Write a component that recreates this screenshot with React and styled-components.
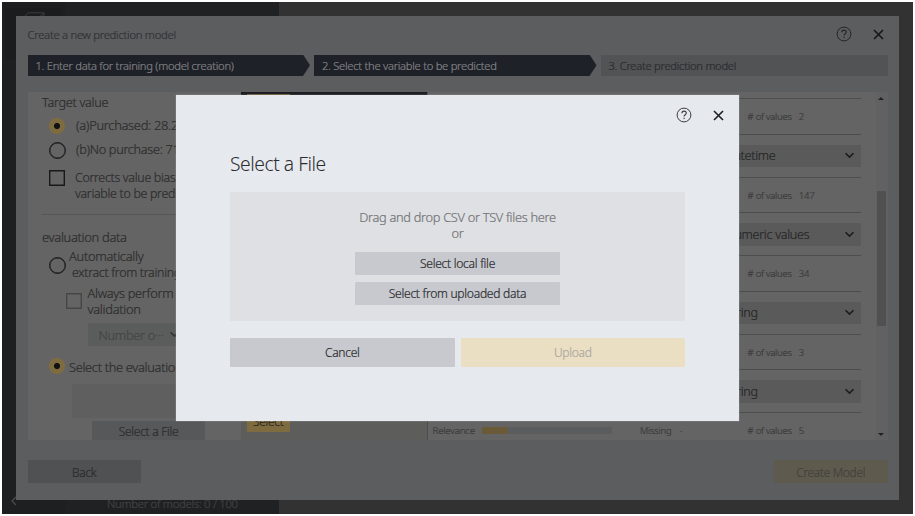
import React from 'react';
import styled, { createGlobalStyle, css } from 'styled-components';

const GlobalStyle = createGlobalStyle`
  * { box-sizing: border-box; letter-spacing: -0.024em; }
  html, body { margin: 0; background: #fff; }
  body {
    font-family: "Noto Sans", "Open Sans", sans-serif; font-weight: 300; overflow: hidden;
    -webkit-text-stroke: .2px currentColor;
  }
`;

const Page = styled.div`
  width: 915px; height: 516px; padding: 2px; position: relative; background: #fff;
`;
const Backdrop = styled.div`
  display: flex; width: 911px; height: 512px; background: #323232;
`;
const Sidebar = styled.div`
  width: 64px; background: #1e1f21; display: flex; flex-direction: column;
`;
const SideTile = styled.div`
  width: 57px; height: 52px; margin: 6px 0 0 3px; background: #1b1c1e; padding: 4px 0 0 18px;
  svg { display: block; }
`;
const SideBack = styled.div`
  margin: auto 0 6px 8px; height: 12px; svg { display: block; }
`;
const Models = styled.div`
  width: 213px; background: #202123; color: #434445; font-size: 11.3px; line-height: 16px;
  display: flex; align-items: flex-end; padding: 0 0 2px 41px; white-space: nowrap;
`;

const Dialog = styled.div`
  position: absolute; left: 16px; top: 16px; width: 883px; height: 483.5px;
  background: #5c5d5f; padding: 0 11.5px; display: flex; flex-direction: column;
`;
const DialogHead = styled.div`
  height: 38.5px; display: flex; align-items: center; padding-right: 3.5px; color: #303132;
  font-size: 11.25px; svg { display: block; }
`;
const HeadTitle = styled.div`flex: 1; margin-top: -2px;`;
const HeadIcons = styled.div`display: flex; gap: 21px; align-items: center; margin-top: -2px;`;

const Steps = styled.div`display: flex; gap: 4px; height: 21.5px; font-size: 11.2px;`;
const Step = styled.div`
  width: ${p => p.$w}px; height: 21.5px; line-height: 22px; padding-left: 8px; white-space: nowrap;
  background: ${p => (p.$done ? '#1f2129' : '#525354')};
  color: ${p => (p.$done ? '#838487' : '#2a2b2d')};
  ${p => p.$done && css`clip-path: polygon(0 0, calc(100% - 7px) 0, 100% 50%, calc(100% - 7px) 100%, 0 100%);`}
`;

const Body = styled.div`
  margin-top: 16px; height: 348px; display: flex; background: #646464; overflow: hidden; flex: none;
`;
const Settings = styled.div`
  width: 213.5px; padding-left: 14.5px; overflow: hidden; color: #2c2c2c; font-size: 12.6px;
  white-space: nowrap;
`;
const PaneTitle = styled.div`height: ${p => p.$h}px; line-height: ${p => p.$lh || 20}px; font-size: ${p => p.$fs || 12.7}px;`;
const Option = styled.div`
  display: flex; align-items: ${p => (p.$top ? 'flex-start' : 'center')}; height: ${p => p.$h}px;
  padding-left: ${p => p.$indent}px; gap: ${p => p.$gap}px; font-size: ${p => p.$fs || 12.9}px; line-height: 15.6px;
`;
const OptionText = styled.div`margin-top: ${p => p.$mt || 0}px;`;
const SecondLine = styled.div`padding-left: ${p => p.$x || 0}px; font-size: ${p => p.$fs || 12.4}px;`;
const Radio = styled.div`
  width: 17px; height: 17px; border-radius: 50%; flex: none; margin-top: ${p => p.$mt || 0}px;
  ${p => p.$on
    ? css`width: 16px; height: 16px; margin-right: 1px; background: radial-gradient(circle, #111 0 2.7px, #7f6b40 3.4px);`
    : css`border: 1.5px solid #191919; box-shadow: inset 0 0 0 .4px #191919;`}
`;
const Check = styled.div`
  width: 16px; height: 16px; flex: none; margin-top: ${p => p.$mt || 0}px;
  border: 1.5px solid ${p => (p.$off ? '#464646' : '#191919')};
  box-shadow: inset 0 0 0 .4px ${p => (p.$off ? '#464646' : '#191919')};
`;
const Rule = styled.div`height: 1px; background: #565656; margin: 0 10px 13px 0;`;
const FoldSelect = styled.div`
  width: 97px; height: 23px; margin: 0 0 20px 45.5px; padding: 0 5px 0 11px; background: #5b5d5d;
  color: #434444; display: flex; align-items: center; justify-content: space-between; font-size: 12.8px;
`;
const FileBox = styled.div`width: 134px; height: 33.5px; margin: 0 0 3px 30px; background: #5f5f5f;`;
const PaneButton = styled.div`
  width: 113px; height: 24px; margin-left: 50px; background: #57585a; text-align: center;
  line-height: 22px; font-size: 12px;
`;

const Preview = styled.div`
  width: 186.5px; background: #5d5d5c; display: flex; flex-direction: column; align-items: flex-start;
  border-right: 1px solid #4d4d4d;
`;
const PreviewBar = styled.div`
  width: 100%; height: 26px; background: #1e1e22; padding: 2px 6px;
`;
const PreviewTab = styled.div`width: 43px; height: 20px; background: #6b5a37;`;
const PickButton = styled.div`
  width: 42.5px; height: 22px; margin: auto 0 8.5px 6px; background: #7f6b40; border-radius: 1px;
  color: #2a271f; font-size: 12px; line-height: 24px; text-align: center;
`;

const Variables = styled.div`width: 433px; padding-left: 5px; overflow: hidden;`;
const Variable = styled.div`height: 78.5px; margin-top: ${p => (p.$first ? -36 : 0)}px;`;
const TypeRow = styled.div`
  height: 42px; display: flex; justify-content: flex-end; align-items: flex-end; padding-bottom: 9.5px;
`;
const TypeSelect = styled.div`
  width: 146px; height: 22.5px; background: #5a5a5a; color: #262626; font-size: 12.6px;
  display: flex; align-items: center; justify-content: space-between; padding: 0 6px 0 11px;
`;
const Stats = styled.div`
  height: 36.5px; border-top: 1.5px solid #4e4e4e; border-bottom: 1px solid #4c4c4c; display: flex;
  align-items: center; color: #3a3a3a; font-size: 9.5px; padding-top: 1px;
  white-space: nowrap;
`;
const StatName = styled.div`width: 49.5px; font-size: 9.8px;`;
const Meter = styled.div`
  width: 130px; height: 7px; background: linear-gradient(90deg, #6b5a37 0 26px, #5a5c5e 26px); margin-right: 28px;
`;
const Missing = styled.div`width: 107.5px; display: flex; gap: 8px;`;
const Count = styled.div`display: flex; gap: 7px;`;

const Scroll = styled.div`
  width: 12px; margin-left: auto; background: #616163; display: flex; flex-direction: column; align-items: center;
  padding: 5px 0 4.5px;
`;
const Thumb = styled.div`width: 9px; height: 135px; margin: 90.5px 1px 0 0; background: #505050;`;
const Arrow = styled.div`
  margin-right: 1px; border: 3px solid transparent; border-width: 0 3px;
  ${p => (p.$down ? css`border-top: 3px solid #222; margin-top: auto;` : css`border-bottom: 3px solid #222;`)}
`;

const DialogFoot = styled.div`
  margin-top: 20px; display: flex; justify-content: space-between;
`;
const FootButton = styled.div`
  width: 113.5px; height: 22.5px; line-height: 24px; text-align: center; font-size: 11.9px;
  background: ${p => (p.$primary ? '#5f5a4e' : '#505153')};
  color: ${p => (p.$primary ? '#42413d' : '#2a2b2c')};
`;

const Modal = styled.div`
  position: absolute; left: 176px; top: 95px; width: 563px; height: 325.5px; background: #e6e9ee;
  padding: 0 54px; display: flex; flex-direction: column; color: #2b2c2f;
  box-shadow: 0 0 1px rgba(255,255,255,.6);
`;
const ModalIcons = styled.div`
  height: 40px; margin-right: -39px; display: flex; justify-content: flex-end; align-items: center; gap: 21px;
`;
const ModalTitle = styled.div`height: 57px; padding-top: 15px; line-height: 28px; font-size: 19.3px; -webkit-text-stroke: 0;`;
const DropZone = styled.div`
  height: 129px; background: #dfe0e3; display: flex; flex-direction: column; align-items: center; padding-top: 17px;
  color: #747578; font-size: 12.8px; line-height: 16px;
`;
const ZoneButton = styled.div`
  width: 205px; height: 23px; margin-top: ${p => p.$mt}px; background: #c8c9ce; border-radius: 1px; color: #2b2c2f;
  text-align: center; line-height: 24.5px; font-size: 12.1px; flex: none;
`;
const Actions = styled.div`margin-top: 17px; display: flex; gap: 6px;`;
const Action = styled.div`
  flex: 1; height: 28.5px; line-height: 30.5px; text-align: center; font-size: 12px; border-radius: 1px;
  background: ${p => (p.$primary ? '#ebdfc3' : '#c8c9ce')};
  color: ${p => (p.$primary ? '#aca8a0' : '#2b2c2f')};
`;

const Help = ({ color }) => (
  <svg width="16" height="16" viewBox="0 0 16 16" fill="none" stroke={color} strokeWidth="1">
    <circle cx="8" cy="8" r="6.9" />
    <path d="M5.9 6.3C5.9 4.9 6.8 4.1 8.1 4.1S10.3 4.9 10.3 6.1C10.3 7.7 8.1 7.8 8.1 9.6" strokeWidth="1.1" />
    <path d="M8.1 10.8V12.1" strokeWidth="1.2" />
  </svg>
);
const Close = ({ color }) => (
  <svg width="11" height="11" viewBox="0 0 11 11" stroke={color} strokeWidth="1.6">
    <path d="M1 1L10 10M10 1L1 10" />
  </svg>
);
const Chevron = ({ color = '#1c1c1c' }) => (
  <svg width="11" height="7" viewBox="0 0 11 7" fill="none" stroke={color} strokeWidth="1.6">
    <path d="M1.5 1.2L5.5 5.1L9.5 1.2" />
  </svg>
);

const variables = [
  { type: 'String', values: 2 },
  { type: 'Datetime', values: 147 },
  { type: 'Numeric values', values: 34 },
  { type: 'String', values: 3 },
  { type: 'String', values: 5 },
];

export default function App() {
  return (
    <Page>
      <GlobalStyle />
      <Backdrop>
        <Sidebar>
          <SideTile>
            <svg width="24" height="14" viewBox="0 0 24 14" fill="none" stroke="#3b3c3d" strokeWidth="1">
              <path d="M1 5.5L5 .8H21V3L17 7.5M1 4.5H17L21 .8" />
            </svg>
          </SideTile>
          <SideBack>
            <svg width="8" height="10" viewBox="0 0 8 10" fill="none" stroke="#4a4b4c" strokeWidth="1.2">
              <path d="M6 1L2 5L6 9" />
            </svg>
          </SideBack>
        </Sidebar>
        <Models>Number of models: 0 / 100</Models>
      </Backdrop>

      <Dialog>
        <DialogHead>
          <HeadTitle>Create a new prediction model</HeadTitle>
          <HeadIcons><Help color="#242526" /><Close color="#161616" /></HeadIcons>
        </DialogHead>
        <Steps>
          <Step $w={282.5} $done>1. Enter data for training (model creation)</Step>
          <Step $w={282.5} $done>2. Select the variable to be predicted</Step>
          <Step $w={287}>3. Create prediction model</Step>
        </Steps>
        <Body>
          <Settings>
            <PaneTitle $h={21}>Target value</PaneTitle>
            <Option $h={25} $indent={7} $gap={10}><Radio $on /><span>(a)Purchased: 28.2%</span></Option>
            <Option $h={24} $indent={7} $gap={10} $fs={12.7}><Radio /><span>(b)No purchase: 71.8%</span></Option>
            <Option $h={52} $indent={7} $gap={10} $top $fs={12.4}>
              <Check $mt={8} />
              <OptionText $mt={8}>Corrects value bias of the<SecondLine>variable to be predicted</SecondLine></OptionText>
            </Option>
            <Rule />
            <PaneTitle $h={21} $fs={12.9} $lh={19}>evaluation data</PaneTitle>
            <Option $h={37} $indent={7} $gap={3} $top>
              <Radio $mt={8} />
              <OptionText>Automatically<SecondLine $x={3}>extract from training data</SecondLine></OptionText>
            </Option>
            <Option $h={37} $indent={24} $gap={5.5} $top $fs={12.8}>
              <Check $off $mt={7} />
              <OptionText>Always perform cross<SecondLine $fs={12.9}>validation</SecondLine></OptionText>
            </Option>
            <FoldSelect>Number o···<Chevron color="#333" /></FoldSelect>
            <Option $h={18} $indent={7} $gap={3} $top $fs={12.8}><Radio $on $mt={-8} /><OptionText $mt={-6}>Select the evaluation data</OptionText></Option>
            <FileBox />
            <PaneButton>Select a File</PaneButton>
          </Settings>
          <Preview>
            <PreviewBar><PreviewTab /></PreviewBar>
            <PickButton>Select</PickButton>
          </Preview>
          <Variables>
            {variables.map((v, i) => (
              <Variable key={i} $first={i === 0}>
                <TypeRow>
                  <TypeSelect>{v.type}<Chevron /></TypeSelect>
                </TypeRow>
                <Stats>
                  <StatName>Relevance</StatName>
                  <Meter />
                  <Missing><span>Missing</span><span>-</span></Missing>
                  <Count><span># of values</span><span>{v.values}</span></Count>
                </Stats>
              </Variable>
            ))}
          </Variables>
          <Scroll><Arrow /><Thumb /><Arrow $down /></Scroll>
        </Body>
        <DialogFoot>
          <FootButton>Back</FootButton>
          <FootButton $primary>Create Model</FootButton>
        </DialogFoot>
      </Dialog>

      <Modal>
        <ModalIcons><Help color="#3c3d40" /><Close color="#1d1e20" /></ModalIcons>
        <ModalTitle>Select a File</ModalTitle>
        <DropZone>
          <div>Drag and drop CSV or TSV files here</div>
          <div>or</div>
          <ZoneButton $mt={10.5}>Select local file</ZoneButton>
          <ZoneButton $mt={7}>Select from uploaded data</ZoneButton>
        </DropZone>
        <Actions>
          <Action>Cancel</Action>
          <Action $primary>Upload</Action>
        </Actions>
      </Modal>
    </Page>
  );
}
